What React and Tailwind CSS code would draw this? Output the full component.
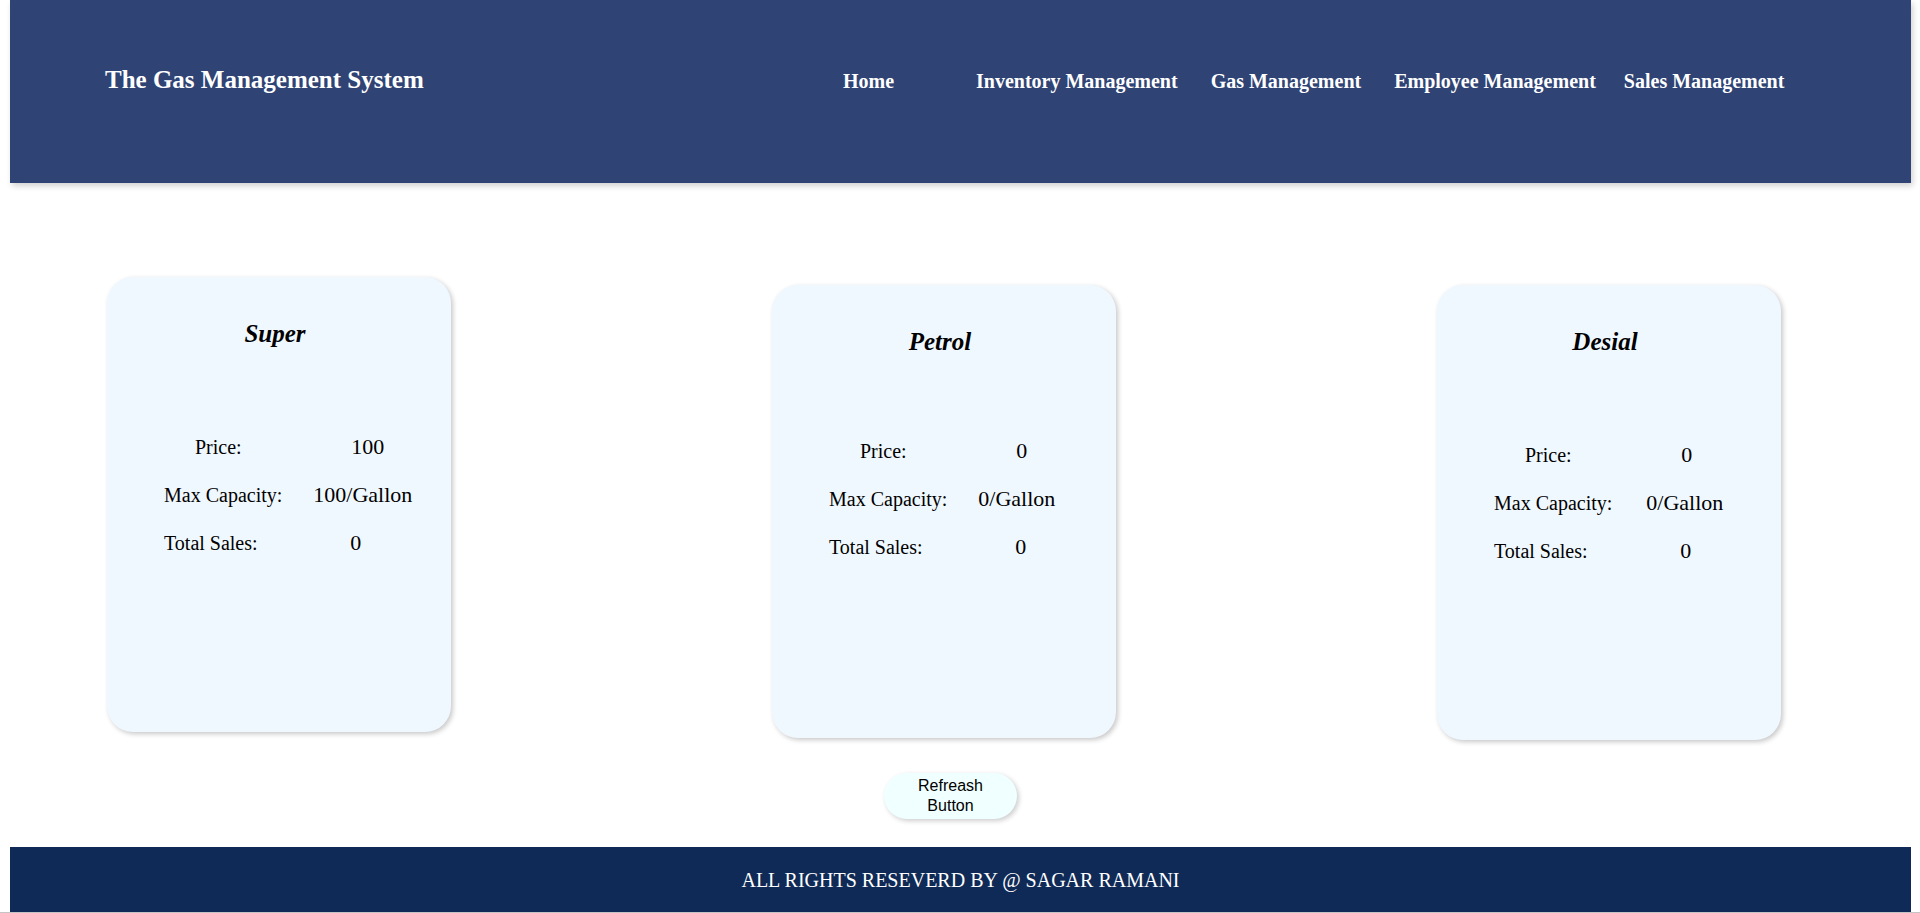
const navItems = [
  { label: "Home", className: "w-[133px]" },
  { label: "Inventory Management", className: "" },
  { label: "Gas Management", className: "ml-[33px]" },
  { label: "Employee Management", className: "ml-[33px]" },
  { label: "Sales Management", className: "ml-[28px]" },
];

const fuels = [
  { name: "Super", price: 100, capacity: 100, sales: 0, top: "mt-0", rows: "mt-[74px]" },
  { name: "Petrol", price: 0, capacity: 0, sales: 0, top: "mt-[8px]", rows: "mt-[70px]", h: "h-[453px]" },
  { name: "Desial", price: 0, capacity: 0, sales: 0, top: "mt-[8px]", rows: "mt-[74px]", shift: "pl-[3px]" },
];

function FuelCard({ fuel }) {
  return (
    <div
      className={`${fuel.top} ${fuel.h || "h-[455px]"} w-[344px] shrink-0 rounded-[26px] bg-[#f0f8ff] pt-[42px] shadow-[2px_2px_5px_rgba(0,0,0,0.22)]`}
    >
      <h2 className="pr-[8px] text-center text-[25px] leading-[30px] font-bold italic text-black">{fuel.name}</h2>
      <div className={`${fuel.rows} ml-[57px] grid grid-cols-[auto_auto] items-baseline justify-start gap-x-[31px] text-black`}>
        <span className="pl-[31px] text-[20px] leading-[48px]">Price:</span>
        <span className="pl-[38px] text-[22px] leading-[48px]">{fuel.price}</span>
        <span className="text-[20px] leading-[48px]">Max Capacity:</span>
        <span className={`${fuel.shift || ""} text-[22px] leading-[48px]`}>{fuel.capacity}/Gallon</span>
        <span className="text-[20px] leading-[48px]">Total Sales:</span>
        <span className="pl-[37px] text-[22px] leading-[48px]">{fuel.sales}</span>
      </div>
    </div>
  );
}

export default function App() {
  return (
    <div className="min-h-[913px] bg-white font-['Liberation_Serif',serif]">
      <div className="ml-[10px] w-[1901px]">
        <header className="flex h-[183px] items-baseline bg-[#2f4374] pt-[67px] pl-[95px] text-white shadow-[2px_3px_6px_rgba(0,0,0,0.18)]">
          <h1 className="w-[738px] shrink-0 text-[25px] leading-none font-bold">The Gas Management System</h1>
          <nav className="flex items-baseline">
            {navItems.map((item) => (
              <a key={item.label} href="#" className={`${item.className} shrink-0 text-[20px] leading-none font-bold whitespace-nowrap`}>
                {item.label}
              </a>
            ))}
          </nav>
        </header>

        <main className="pt-[94px]">
          <div className="flex items-start gap-[321px] pl-[97px]">
            {fuels.map((fuel) => (
              <FuelCard key={fuel.name} fuel={fuel} />
            ))}
          </div>

          <button className="mt-[33px] ml-[874px] flex h-[46px] w-[133px] items-center justify-center rounded-full bg-[#f0ffff] font-['Liberation_Sans',Arial,sans-serif] text-[16px] leading-[20px] text-black shadow-[2px_2px_5px_rgba(0,0,0,0.2)]">
            Refreash
            <br />
            Button
          </button>
        </main>

        <footer className="mt-[28px] flex h-[65px] items-center justify-center bg-[#0f2a56] text-[20px] text-white">
          ALL RIGHTS RESEVERD BY @ SAGAR RAMANI
        </footer>
      </div>
      <div className="h-px w-full bg-[#c4c4c4]" />
    </div>
  );
}
